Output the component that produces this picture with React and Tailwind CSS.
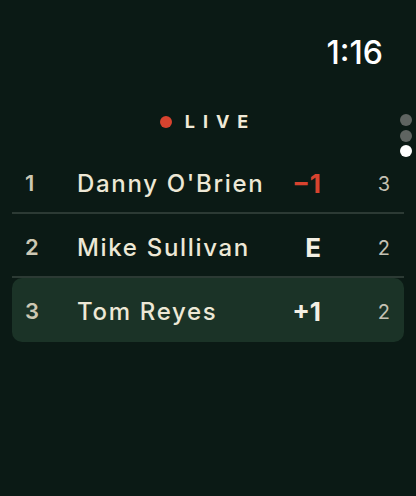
import React from "react";

const players = [
  { rank: 1, name: "Danny O'Brien", score: "\u22121", thru: 3, under: true },
  { rank: 2, name: "Mike Sullivan", score: "E", thru: 2 },
  { rank: 3, name: "Tom Reyes", score: "+1", thru: 2, me: true },
];

const Row = ({ p }) => {
  const scoreColor = p.under ? "text-[#d8432f]" : "text-[#f3efe3]";
  return (
    <div
      className={
        p.me
          ? "flex items-center h-[64px] pt-[3px] pl-[13px] pr-[14px] rounded-[10px] bg-[#1b3327]"
          : "flex items-center h-[64px] pt-[5px] pl-[13px] pr-[14px] border-b-2 border-[#2c3a34]"
      }
    >
      <div className="w-[52px] text-[22px] font-semibold text-[#cdc8b4]">{p.rank}</div>
      <div className="flex-1 text-[24px] font-medium tracking-[0.07em] text-[#ede8d6]">
        {p.name}
      </div>
      <div className={"text-[26px] font-bold " + scoreColor}>{p.score}</div>
      <div className="w-[69px] text-right text-[20px] text-[#c4c1b3]">{p.thru}</div>
    </div>
  );
};

const App = () => {
  return (
    <div
      className="relative h-[496px] w-full bg-[#0b1a15] overflow-hidden"
      style={{ fontFamily: "Inter, 'Noto Sans', sans-serif" }}
    >
      <div className="flex justify-end pr-[33px] pt-[37px]">
        <span className="text-[32px] font-medium text-white leading-none">1:16</span>
      </div>

      <div className="flex items-center justify-center gap-[13px] mt-[39px]">
        <span className="w-[12px] h-[12px] rounded-full bg-[#d8432f]" />
        <span className="text-[18px] font-bold tracking-[0.44em] text-[#f0ead8]">LIVE</span>
      </div>

      <div className="absolute right-[4px] top-[114px] flex flex-col gap-[3.5px]">
        <span className="w-[12px] h-[12px] rounded-full bg-[#5f6461]" />
        <span className="w-[12px] h-[12px] rounded-full bg-[#5f6461]" />
        <span className="w-[12px] h-[12px] rounded-full bg-white" />
      </div>

      <div className="px-3 mt-[15px] flex flex-col">
        <Row p={players[0]} />
        <Row p={players[1]} />
        <Row p={players[2]} />
      </div>
    </div>
  );
};

export default App;
